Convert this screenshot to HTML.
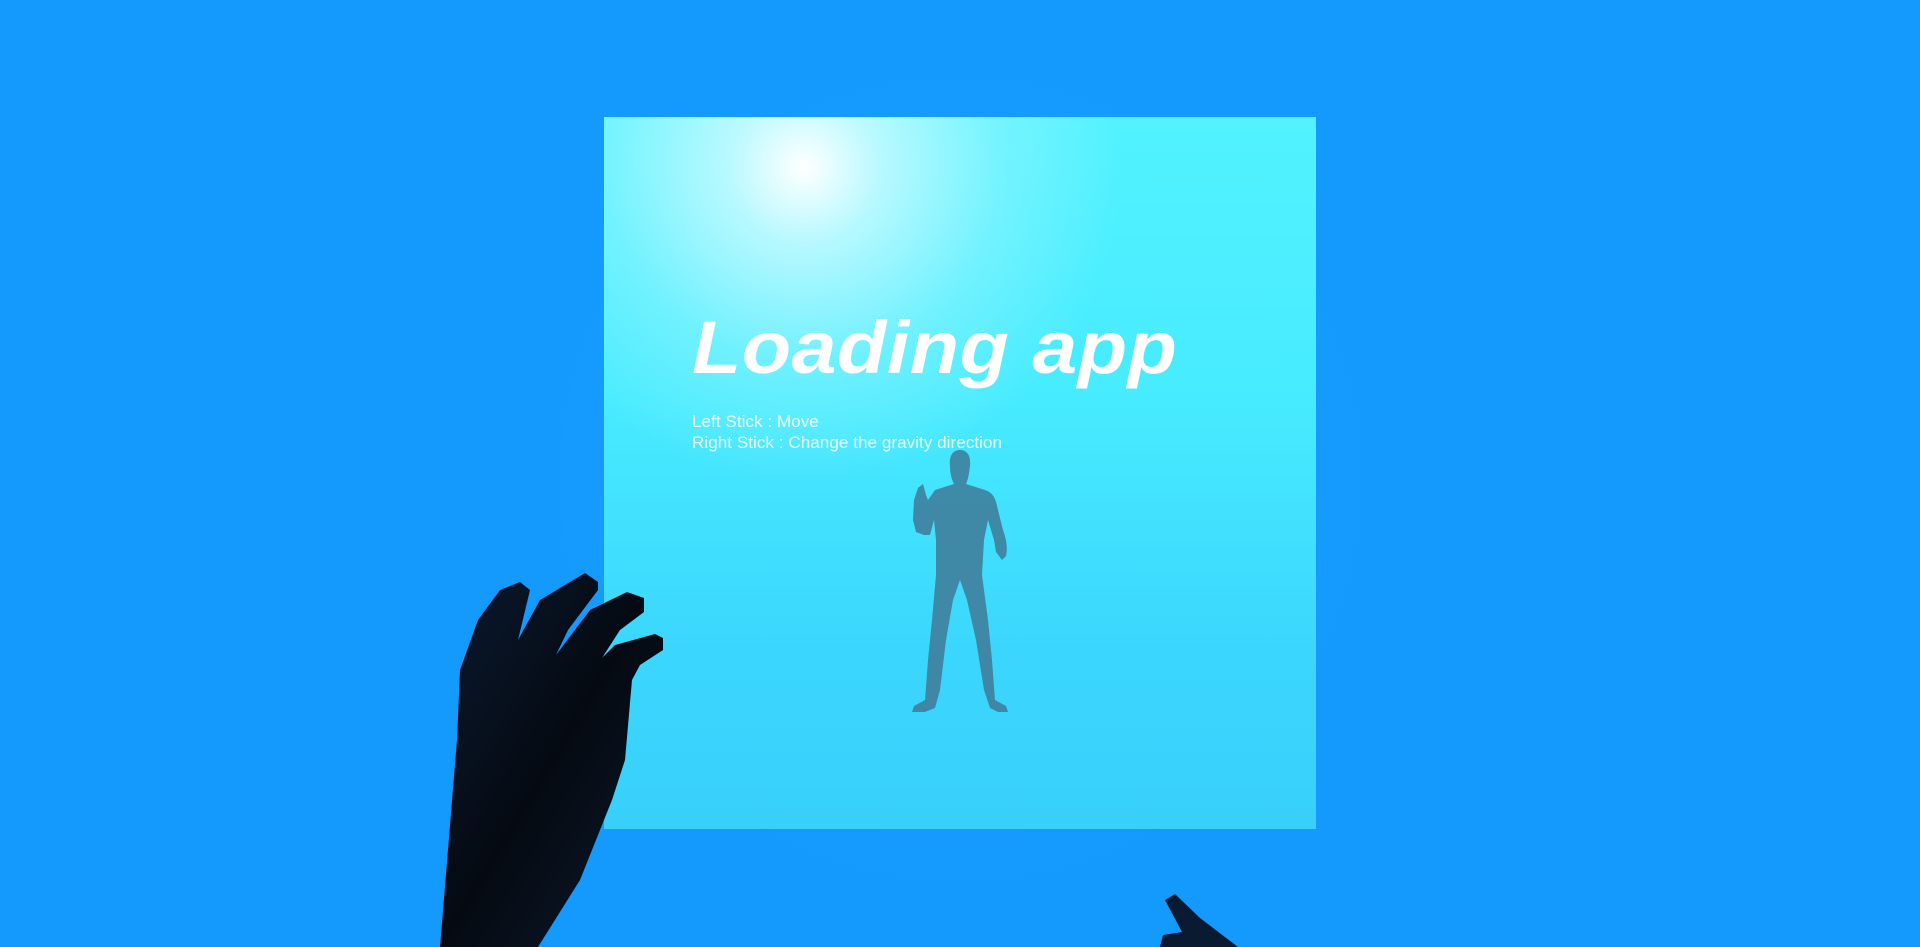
<!DOCTYPE html>
<html><head><meta charset="utf-8"><style>
html,body{margin:0;padding:0;width:1920px;height:947px;overflow:hidden;background:#1499fd;}
.glow{position:absolute;left:540px;top:60px;width:840px;height:840px;background:radial-gradient(ellipse at center,rgba(40,170,255,0.55) 0%,rgba(30,160,255,0.3) 50%,rgba(20,153,253,0) 72%);}
.panel{position:absolute;left:604px;top:117px;width:712px;height:712px;overflow:hidden;
background:linear-gradient(180deg,#52f2ff 0%,#47ebff 40%,#3bd6fd 75%,#38d0fb 100%);}
.spot{position:absolute;left:-130px;top:-280px;width:660px;height:660px;background:radial-gradient(circle at center,rgba(255,255,255,1) 0%,rgba(255,255,255,0.6) 16%,rgba(200,250,255,0.3) 42%,rgba(180,250,255,0) 68%);}
.title{position:absolute;left:88px;top:188px;font-family:"Liberation Sans",sans-serif;font-weight:bold;font-style:italic;font-size:74px;color:#fff;letter-spacing:0.5px;white-space:nowrap;transform:scaleX(1.09);transform-origin:left;}
.sub{position:absolute;left:88px;top:295px;font-family:"Liberation Sans",sans-serif;font-size:16.5px;line-height:21px;color:rgba(255,255,255,0.88);white-space:nowrap;transform:scaleX(1.04);transform-origin:left;}
svg{position:absolute;left:0;top:0;}
</style></head><body>
<div class="glow"></div>
<div class="panel">
<div class="spot"></div>
<div class="title">Loading app</div>
<div class="sub">Left Stick : Move<br>Right Stick : Change the gravity direction</div>
</div>
<svg width="1920" height="947" viewBox="0 0 1920 947">
<path fill="#3f7f9c" opacity="0.9" d="M960,450 C968,450 971,457 970,466 C969,474 968,480 966,484 L985,490 C994,493 996,500 998,510 L1003,530 C1006,538 1008,548 1006,556 L1002,560 L996,552 L994,540 L988,520 L984,540 L982,575 L988,620 L992,660 L995,700 L1006,706 L1008,712 L998,712 L990,708 L984,690 L976,640 L967,600 L960,580 L953,600 L946,640 L940,690 L935,708 L925,712 L912,712 L914,706 L925,700 L928,660 L932,620 L936,575 L936,540 L934,520 L930,535 L924,535 L916,532 L913,520 L914,500 L918,488 L923,484 L926,495 L928,500 L935,490 L954,484 C951,478 950,472 950,466 C949,457 952,450 960,450 Z"/>
<defs><linearGradient id="hg" x1="0" y1="0" x2="1" y2="1"><stop offset="0" stop-color="#0a1a30"/><stop offset="0.5" stop-color="#050a12"/><stop offset="1" stop-color="#0c1a2c"/></linearGradient></defs>
<path fill="url(#hg)" d="M440,947 L457,740 L460,670 L478,620 L500,590 L520,582 L530,590 L518,640 L540,600 L585,573 L598,582 L598,590 L568,630 L556,655 L590,610 L627,592 L644,598 L644,612 L620,630 L602,658 L615,645 L655,634 L663,638 L663,650 L640,665 L632,680 L625,760 L612,800 L580,880 L538,947 Z"/>
<path fill="#0a1a30" d="M1165,900 L1175,894 L1200,918 L1238,947 L1160,947 L1163,935 L1182,932 Z"/>
</svg>
</body></html>
